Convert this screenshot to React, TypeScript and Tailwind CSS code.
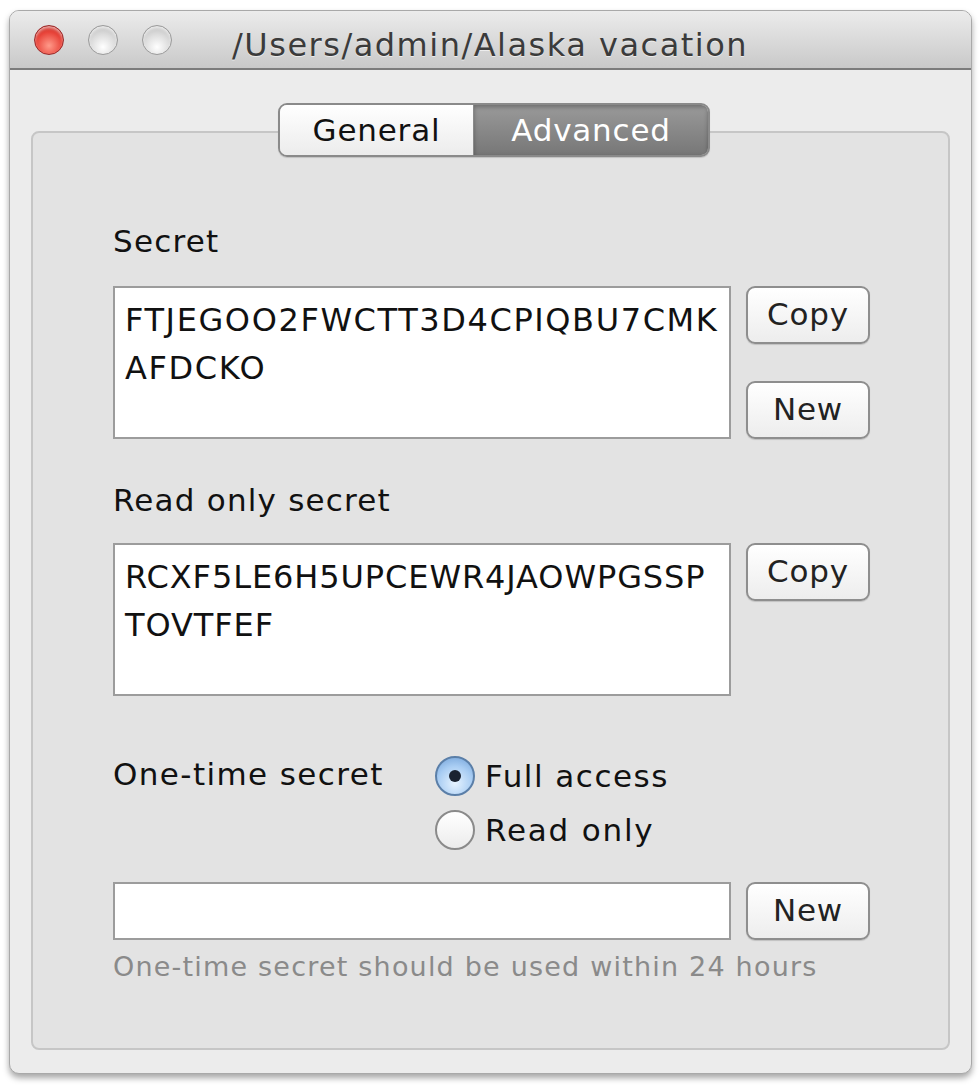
import React from "react";

const font = { fontFamily: '"DejaVu Sans", "Liberation Sans", sans-serif' };

function Light({ red }: { red?: boolean }) {
  return (
    <div
      className={
        red
          ? "w-[30px] h-[30px] rounded-full border border-[#9a2a2a] bg-[radial-gradient(circle_at_50%_70%,#ff9a8a_0%,#e8443a_55%,#b52a24_100%)] shadow-[inset_0_2px_3px_rgba(255,255,255,0.6)]"
          : "w-[30px] h-[30px] rounded-full border border-[#9b9b9b] bg-[radial-gradient(circle_at_50%_75%,#ffffff_0%,#dcdcdc_50%,#b4b4b4_100%)] shadow-[inset_0_2px_3px_rgba(255,255,255,0.7)]"
      }
    />
  );
}

function Btn({ children }: { children: React.ReactNode }) {
  return (
    <button className="w-[124px] h-[58px] rounded-[9px] border-2 border-[#8e8e8e] bg-gradient-to-b from-[#ffffff] to-[#ededed] text-[31px] tracking-[0.8px] text-[#222] shadow-[0_1px_1px_rgba(0,0,0,0.15)] flex items-center justify-center pb-[2px]">
      {children}
    </button>
  );
}

function SecretBox({ lines, track }: { lines: string[]; track: string }) {
  return (
    <div className={`w-[618px] h-[153px] bg-white border-2 border-[#9c9c9c] px-[10px] pt-[8px] text-[32px] leading-[48px] text-[#111] ${track}`}>
      {lines.map((l) => (
        <div key={l}>{l}</div>
      ))}
    </div>
  );
}

export default function App() {
  return (
    <div className="w-[980px] h-[1089px] bg-white pt-[10px] px-[9px]" style={font}>
      <div className="w-[963px] h-[1064px] rounded-[10px] bg-[#ececec] border border-[#a9a9a9] shadow-[0_4px_6px_rgba(0,0,0,0.35)] overflow-hidden flex flex-col">
        {/* title bar */}
        <div className="h-[59px] bg-gradient-to-b from-[#ececec] to-[#c9c9c9] border-b-2 border-[#7c7c7c] flex items-center relative">
          <div className="flex gap-[24px] pl-[24px]">
            <Light red />
            <Light />
            <Light />
          </div>
          <div className="absolute left-[222px] top-[10px] text-[32px] tracking-[1.5px] text-[#3b3b3b] [text-shadow:0_1px_0_rgba(255,255,255,0.6)]">
            /Users/admin/Alaska vacation
          </div>
        </div>

        {/* body */}
        <div className="relative flex-1 px-[21px] pt-[61px] pb-[23px]">
          <div className="h-full rounded-[8px] bg-[#e3e3e3] border-2 border-[#c6c6c6] pl-[80px] pt-[90px]">
            {/* Secret */}
            <div className="text-[31px] tracking-[1.2px] text-[#111] leading-[36px]">Secret</div>
            <div className="flex gap-[15px] mt-[27px]">
              <SecretBox track="tracking-[1.6px]" lines={["FTJEGOO2FWCTT3D4CPIQBU7CMK", "AFDCKO"]} />
              <div className="flex flex-col gap-[37px]">
                <Btn>Copy</Btn>
                <Btn>New</Btn>
              </div>
            </div>

            {/* Read only */}
            <div className="text-[31px] tracking-[1.2px] text-[#111] leading-[36px] mt-[43px]">Read only secret</div>
            <div className="flex gap-[15px] mt-[25px]">
              <SecretBox track="tracking-[0.9px]" lines={["RCXF5LE6H5UPCEWR4JAOWPGSSP", "TOVTFEF"]} />
              <div className="flex flex-col">
                <Btn>Copy</Btn>
              </div>
            </div>

            {/* One-time */}
            <div className="flex mt-[60px]">
              <div className="text-[31px] tracking-[1.4px] text-[#111] leading-[36px] w-[322px]">One-time secret</div>
              <div className="flex flex-col gap-[14px]">
                <div className="flex items-center gap-[10px]">
                  <div className="w-[40px] h-[40px] rounded-full border-2 border-[#5b7fa8] bg-[radial-gradient(circle_at_50%_70%,#e6f3ff_0%,#a9cdf3_55%,#6f9fd6_100%)] flex items-center justify-center">
                    <div className="w-[12px] h-[12px] rounded-full bg-[#1a2230]" />
                  </div>
                  <span className="text-[31px] tracking-[1.5px] text-[#111] leading-[36px]">Full access</span>
                </div>
                <div className="flex items-center gap-[10px]">
                  <div className="w-[40px] h-[40px] rounded-full border-2 border-[#8a8a8a] bg-gradient-to-b from-[#ffffff] to-[#ececec]" />
                  <span className="text-[31px] tracking-[1.8px] text-[#111] leading-[36px]">Read only</span>
                </div>
              </div>
            </div>

            <div className="flex gap-[15px] mt-[32px]">
              <div className="w-[618px] h-[58px] bg-white border-2 border-[#9c9c9c]" />
              <Btn>New</Btn>
            </div>
            <div className="text-[27px] tracking-[1.2px] text-[#8a8a8a] leading-[32px] mt-[11px]">
              One-time secret should be used within 24 hours
            </div>
          </div>

          {/* tabs */}
          <div className="absolute left-[268px] top-[33px] flex h-[54px] rounded-[9px] border-2 border-[#8a8a8a] overflow-hidden shadow-[0_1px_1px_rgba(0,0,0,0.15)]">
            <div className="w-[194px] bg-gradient-to-b from-[#ffffff] to-[#ececec] text-[31px] tracking-[0.8px] text-[#111] flex items-center justify-center border-r border-[#8a8a8a]">
              General
            </div>
            <div className="w-[234px] bg-gradient-to-b from-[#9a9a9a] to-[#777] text-[31px] tracking-[0.8px] text-white flex items-center justify-center shadow-[inset_0_2px_4px_rgba(0,0,0,0.3)]">
              Advanced
            </div>
          </div>
        </div>
      </div>
    </div>
  );
}
